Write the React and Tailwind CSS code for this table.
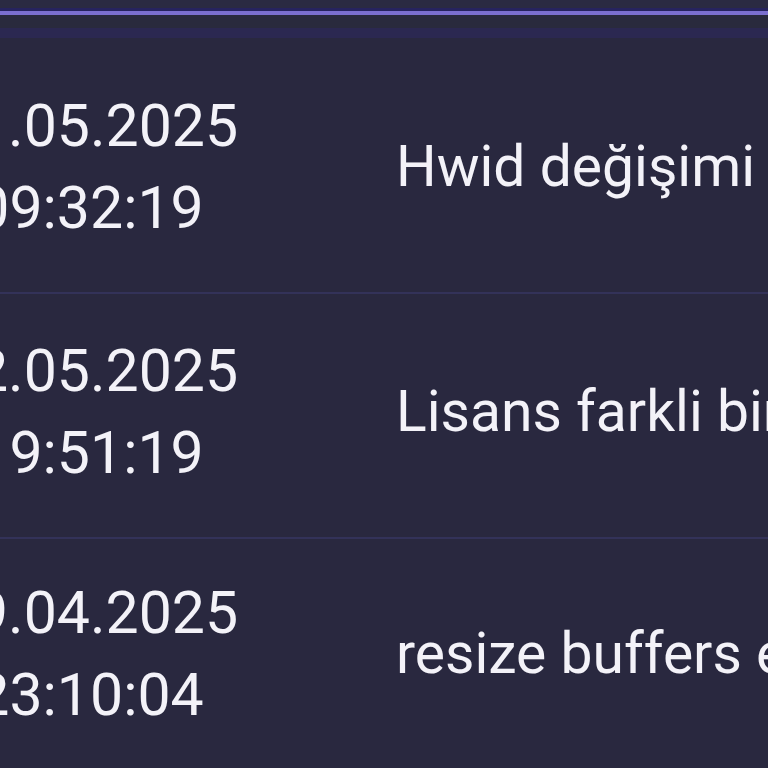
const rows = [
   { date: "01.05.2025", time: "09:32:19", text: "Hwid değişimi yapıldı", pad: "pt-[70px] pb-[43px]" },
   { date: "22.05.2025", time: "19:51:19", text: "Lisans farkli bir cihazda kullanildi", pad: "pt-[36px] pb-[43px]" },
   { date: "29.04.2025", time: "23:10:04", text: "resize buffers error", pad: "py-[33px]" },
];

const LogRow = ({ row, first }) => (
   <div
      className={
         "flex flex-row items-center " +
         row.pad +
         (first ? "" : " border-t-2 border-[#333259]")
      }
   >
      <div className="w-[300px] -ml-[60px] shrink-0 text-center text-[59px] leading-[82px]">
         <div>{row.date}</div>
         <div>{row.time}</div>
      </div>
      <div className="pl-[156px] whitespace-nowrap text-[57px] leading-[82px]">{row.text}</div>
   </div>
);

const App = () => {
   return (
      <div
         className="w-[768px] h-[768px] overflow-hidden bg-[#29283f] text-[#f3f2f8]"
         style={{ fontFamily: "Roboto, 'Liberation Sans', sans-serif" }}
      >
         <div className="h-[8px] bg-[#2a2a42]" />
         <div className="h-[3px] bg-[#26235e]" />
         <div className="h-[4px] bg-[#7b6fcf]" />
         <div className="h-[13px] bg-[#292a3d]" />
         <div className="h-[10px] bg-[#2b2851]" />
         <div className="-mt-[23px]">
            {rows.map((row, i) => (
               <LogRow key={row.date} row={row} first={i === 0} />
            ))}
         </div>
      </div>
   );
};

export default App;
